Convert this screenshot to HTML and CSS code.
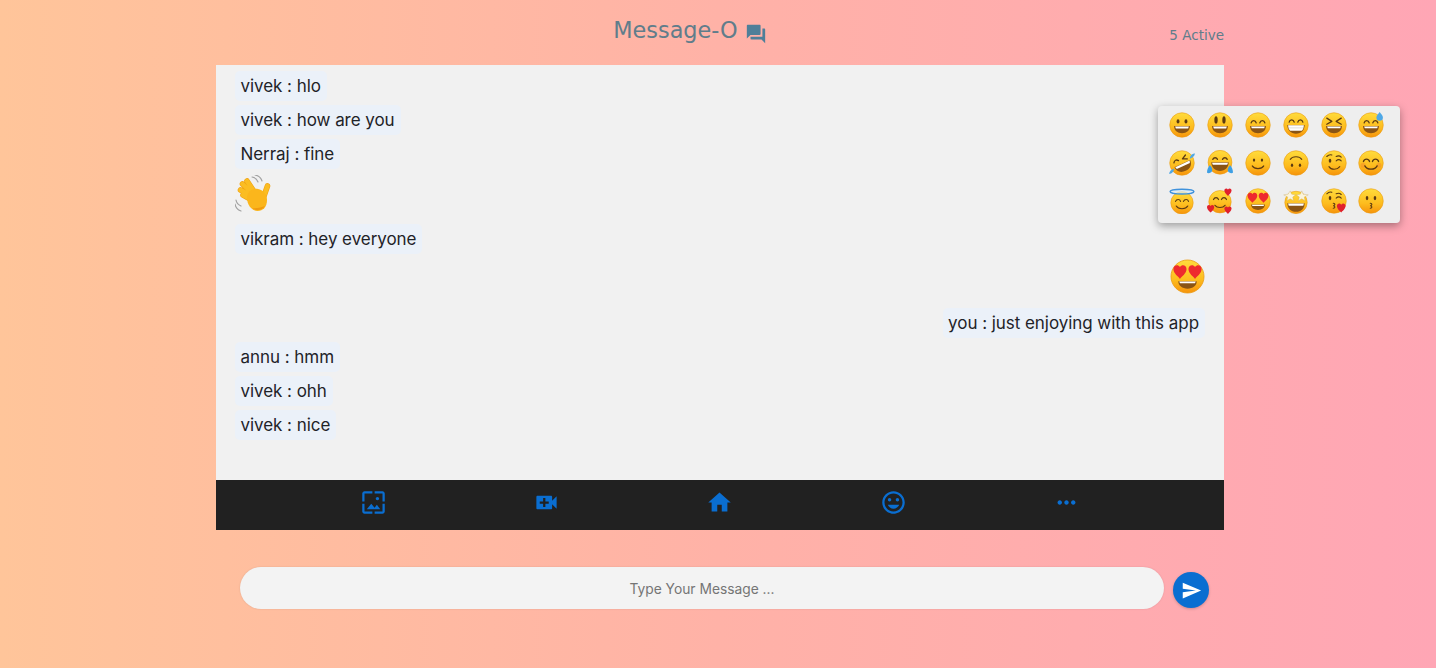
FILE: index.html
```html
<!DOCTYPE html>
<html lang="en">
<head>
<meta charset="utf-8">
<title>Message-O</title>
<link rel="stylesheet" href="styles.css">
</head>
<body>
<svg class="defs" width="0" height="0" aria-hidden="true">
  <defs>
    <linearGradient id="yf" x1="0" y1="0" x2="0" y2="1"><stop offset="0" stop-color="#ffdc3c"/><stop offset=".6" stop-color="#fdbc1e"/><stop offset="1" stop-color="#f6930b"/></linearGradient>
    <symbol id="face" viewBox="0 0 36 36"><circle cx="18" cy="18" r="17" fill="url(#yf)" stroke="#ea9a12" stroke-width=".8"/></symbol>
    <symbol id="e1" viewBox="0 0 36 36"><use href="#face"/><ellipse cx="12.500" cy="13" rx="2" ry="2.800" fill="#5a3a12"/><ellipse cx="23.500" cy="13" rx="2" ry="2.800" fill="#5a3a12"/><path d="M7 19.500h22c0 6-4.500 10-11 10S7 25.500 7 19.500z" fill="#8a5414"/><path d="M8.500 20h19l-1 3h-17z" fill="#fff"/></symbol>
    <symbol id="e2" viewBox="0 0 36 36"><use href="#face"/><ellipse cx="12.500" cy="11" rx="2.300" ry="5" fill="#5a3a12"/><ellipse cx="23.500" cy="11" rx="2.300" ry="5" fill="#5a3a12"/><path d="M7 19.500h22c0 6-4.500 10-11 10S7 25.500 7 19.500z" fill="#8a5414"/><path d="M8.500 20h19l-1 3h-17z" fill="#fff"/></symbol>
    <symbol id="e3" viewBox="0 0 36 36"><use href="#face"/><path d="M8.500 15c1-4 6-4 7 0M20.500 15c1-4 6-4 7 0" fill="none" stroke="#5a3a12" stroke-width="1.800" stroke-linecap="round"/><path d="M7 19.500h22c0 6-4.500 10-11 10S7 25.500 7 19.500z" fill="#8a5414"/><path d="M8.500 20h19l-1 2.500h-17z" fill="#fff"/></symbol>
    <symbol id="e4" viewBox="0 0 36 36"><use href="#face"/><path d="M8.500 14c1-4 6-4 7 0M20.500 14c1-4 6-4 7 0" fill="none" stroke="#5a3a12" stroke-width="1.800" stroke-linecap="round"/><path d="M6 18h24c0 7-5 12-12 12S6 25 6 18z" fill="#8a5414"/><path d="M7 18.500h22c-.5 3.500-1 6-3 7.500H10c-2-1.500-2.500-4-3-7.500z" fill="#fff"/><path d="M7.500 22h21" stroke="#b9b4ac" stroke-width=".6"/></symbol>
    <symbol id="e5" viewBox="0 0 36 36"><use href="#face"/><path d="M8 8.500l7 4.500-7 4M28 8.500l-7 4.500 7 4" fill="none" stroke="#5a3a12" stroke-width="1.800" stroke-linecap="round" stroke-linejoin="round"/><path d="M7 19.500h22c0 6-4.500 10-11 10S7 25.500 7 19.500z" fill="#8a5414"/><path d="M8.500 20h19l-1 2.500h-17z" fill="#fff"/></symbol>
    <symbol id="e6" viewBox="0 0 36 36"><use href="#face"/><path d="M8.500 15c1-4 6-4 7 0M20.500 15c1-4 6-4 7 0" fill="none" stroke="#5a3a12" stroke-width="1.800" stroke-linecap="round"/><path d="M7 19.500h22c0 6-4.500 10-11 10S7 25.500 7 19.500z" fill="#8a5414"/><path d="M8.500 20h19l-1 2.500h-17z" fill="#fff"/><path d="M30 0c2 3 4.500 5 4.500 7.500a4.500 4.500 0 0 1-9 0C25.500 5 28 3 30 0z" fill="#4fa8e6"/></symbol>
    <symbol id="e7" viewBox="0 0 36 36"><use href="#face"/><g transform="rotate(-25 18 18)"><path d="M8 13c2-3 5-3 7 0M21 13l6-3M21 13l6 3" fill="none" stroke="#5a3a12" stroke-width="1.800" stroke-linecap="round"/><path d="M6 19h24c0 7-5 11-12 11S6 26 6 19z" fill="#8a5414"/><path d="M7 19.500h22l-1 3H8z" fill="#fff"/></g><path d="M0 33c1-4 3-6 7-7 0 4-3 7-7 7zM36 5c-1 4-3 6-7 7 0-4 3-7 7-7z" fill="#4fa8e6"/></symbol>
    <symbol id="e8" viewBox="0 0 36 36"><circle cx="18" cy="17" r="16.500" fill="url(#yf)" stroke="#ea9a12" stroke-width=".8"/><path d="M8 13c1.500-3 5-3 6.500 0M21.500 13c1.500-3 5-3 6.500 0" fill="none" stroke="#5a3a12" stroke-width="1.800" stroke-linecap="round"/><path d="M6 17h24c0 7-5 12-12 12S6 24 6 17z" fill="#8a5414"/><path d="M7 17.500h22l-1 3H8z" fill="#fff"/><path d="M0 31c0-4 2-8 4-10 3 3 4 6 3 8-1 3-6 4-7 2zM36 31c0-4-2-8-4-10-3 3-4 6-3 8 1 3 6 4 7 2z" fill="#3d9fe4"/></symbol>
    <symbol id="e9" viewBox="0 0 36 36"><use href="#face"/><ellipse cx="12.500" cy="14" rx="1.600" ry="2.400" fill="#5a3a12"/><ellipse cx="23.500" cy="14" rx="1.600" ry="2.400" fill="#5a3a12"/><path d="M10 22c3 5 13 5 16 0" fill="none" stroke="#5a3a12" stroke-width="1.500" stroke-linecap="round"/></symbol>
    <symbol id="e10" viewBox="0 0 36 36"><use href="#face"/><ellipse cx="12.500" cy="21" rx="1.600" ry="2.400" fill="#5a3a12"/><ellipse cx="23.500" cy="21" rx="1.600" ry="2.400" fill="#5a3a12"/><path d="M10 13c3-5 13-5 16 0" fill="none" stroke="#5a3a12" stroke-width="1.500" stroke-linecap="round"/></symbol>
    <symbol id="e11" viewBox="0 0 36 36"><use href="#face"/><ellipse cx="12.500" cy="15" rx="1.800" ry="2.800" fill="#5a3a12"/><path d="M8 9c2-2 5-3 7-2M21 15c2-2 5-2 7 0M21 9c2-1 5-1 7 1" fill="none" stroke="#5a3a12" stroke-width="1.500" stroke-linecap="round"/><path d="M11 23c3 5 11 5 15 0" fill="none" stroke="#5a3a12" stroke-width="1.500" stroke-linecap="round"/></symbol>
    <symbol id="e12" viewBox="0 0 36 36"><use href="#face"/><circle cx="7" cy="21" r="3.500" fill="#f58a2a" opacity=".5"/><circle cx="29" cy="21" r="3.500" fill="#f58a2a" opacity=".5"/><path d="M7.500 16c1.500-4.500 7-4.500 8.500 0M20 16c1.500-4.500 7-4.500 8.500 0M9.500 22c3 6 14 6 17 0" fill="none" stroke="#5a3a12" stroke-width="1.800" stroke-linecap="round"/></symbol>
    <symbol id="e13" viewBox="0 0 36 36"><circle cx="18" cy="20.500" r="15.500" fill="url(#yf)" stroke="#ea9a12" stroke-width=".8"/><path d="M9 18.500c1.500-3.500 6-3.500 7 0M20 18.500c1.500-3.500 6-3.500 7 0M10 25c3 5 13 5 16 0" fill="none" stroke="#5a3a12" stroke-width="1.600" stroke-linecap="round"/><ellipse cx="18" cy="5" rx="16.500" ry="3.400" fill="#d8edf8" fill-opacity=".7" stroke="#3f92dc" stroke-width="2"/></symbol>
    <g id="heart"><path d="M0 2.500C0-.5 3.500-1.500 5 1 6.500-1.500 10-.5 10 2.500 10 6 6 8.500 5 10 4 8.500 0 6 0 2.500z"/></g>
    <symbol id="e14" viewBox="0 0 36 36"><circle cx="18" cy="19" r="15.500" fill="url(#yf)" stroke="#ea9a12" stroke-width=".8"/><path d="M9 16c1.500-3.500 5.500-3.500 7 0M20 16c1.500-3.500 5.500-3.500 7 0M11 24c3 4 11 4 14 0" fill="none" stroke="#5a3a12" stroke-width="1.600" stroke-linecap="round"/><use href="#heart" fill="#e0202c" transform="translate(24 1)"/><use href="#heart" fill="#e0202c" transform="translate(0 24)"/><use href="#heart" fill="#e0202c" transform="translate(24 26)"/></symbol>
    <symbol id="e15" viewBox="0 0 36 36"><use href="#face"/><use href="#heart" fill="#ee2a2e" transform="translate(3.500 7) scale(1.350)"/><use href="#heart" fill="#ee2a2e" transform="translate(19 7) scale(1.350)"/><path d="M8.500 23h19c0 4.500-4 7.500-9.500 7.500S8.500 27.500 8.500 23z" fill="#8a5414"/><path d="M9.500 23.200h17l-.8 1.800H10.300z" fill="#fff"/></symbol>
    <symbol id="e16" viewBox="0 0 36 36"><circle cx="18" cy="20" r="15.500" fill="url(#yf)" stroke="#ea9a12" stroke-width=".8"/><path d="M10 4l2 4.500 5.500 1-4 3 1 5-4.500-2.500L5.500 17.500l1-5L1 9.500l6-1zM26 4l2 4.500 7 1-5.500 3 1 5-4.500-2.500-4.500 2.500 1-5-4-3 5.500-1z" fill="#fbf4dc" stroke="#c7a45a" stroke-width=".5"/><path d="M6 21h24c0 7-5 12-12 12S6 28 6 21z" fill="#8a5414"/><path d="M7 21.500h22l-1 3H8z" fill="#fff"/></symbol>
    <symbol id="e17" viewBox="0 0 36 36"><use href="#face"/><ellipse cx="12.500" cy="14" rx="1.800" ry="2.800" fill="#5a3a12"/><path d="M8 8c2-2 5-3 7-2M21 14c2-2 5-2 7 0M21 8c2-1 5-1 7 1M17 21c3 0 3 3 0 3.500 3 .5 3 3.500 0 3.500" fill="none" stroke="#5a3a12" stroke-width="1.500" stroke-linecap="round"/><use href="#heart" fill="#e0202c" transform="translate(22 22) scale(1.200)"/></symbol>
    <symbol id="e18" viewBox="0 0 36 36"><use href="#face"/><ellipse cx="12.500" cy="14" rx="1.800" ry="2.800" fill="#5a3a12"/><ellipse cx="23.500" cy="14" rx="1.800" ry="2.800" fill="#5a3a12"/><path d="M17 21c3 0 3 3 0 3.500 3 .5 3 3.500 0 3.500" fill="none" stroke="#5a3a12" stroke-width="1.500" stroke-linecap="round"/></symbol>
    <symbol id="wave" viewBox="0 0 38 38">
      <path d="M17 2c3 .5 5 2.500 6 5M20 0c3 .5 6 3 7 6M1 25c.5 3 2.500 5 5 6M0 29c.5 3 3 6 6 7" stroke="#a3a3a3" stroke-width="1.200" fill="none" stroke-linecap="round"/>
      <g stroke-linecap="round" fill="none" stroke="#f0a315" stroke-width="5.600">
        <path d="M20 18L12 6M18 19L7.500 9M16.500 21L5.500 15M17 25L8 20M29 21l3.500-10"/>
      </g>
      <g stroke-linecap="round" fill="none" stroke="#fbbd22" stroke-width="4.400">
        <path d="M20 18L12 6M18 19L7.500 9M16.500 21L5.500 15M17 25L8 20M29 21l3.500-10"/>
      </g>
      <path d="M12 23c0-6 5-10 11-9 5 1 9 5 9 11 0 7-4 11-9.500 11S12 30 12 23z" fill="#fbb61c"/>
      <path d="M17 33c4 3 10 3 13-2-3 1-9 3-13 2z" fill="#f19a10"/>
    </symbol>
  </defs>
</svg>

<div class="app">
  <header class="top">
    <h1 class="title">Message-O <svg class="forum" viewBox="0 0 24 24"><path d="M21 6h-2v9H6v2c0 .55.45 1 1 1h11l4 4V7c0-.55-.45-1-1-1zm-4 6V3c0-.55-.45-1-1-1H3c-.55 0-1 .45-1 1v14l4-4h10c.55 0 1-.45 1-1z"/></svg></h1>
    <span class="active">5 Active</span>
  </header>

  <section class="chat">
    <div class="messages">
      <p class="msg"><span class="bubble">vivek : hlo</span></p>
      <p class="msg"><span class="bubble">vivek : how are you</span></p>
      <p class="msg"><span class="bubble">Nerraj : fine</span></p>
      <svg class="wave-emoji"><use href="#wave"/></svg>
      <p class="msg"><span class="bubble">vikram : hey everyone</span></p>
      <div class="msg mine emoji-row"><svg class="big-emoji"><use href="#e15"/></svg></div>
      <p class="msg mine"><span class="bubble">you : just enjoying with this app</span></p>
      <p class="msg"><span class="bubble">annu : hmm</span></p>
      <p class="msg"><span class="bubble">vivek : ohh</span></p>
      <p class="msg"><span class="bubble">vivek : nice</span></p>
    </div>
    <nav class="toolbar">
      <span class="tool"><svg viewBox="0 0 24 24"><path d="M4 4h7V2H4c-1.100 0-2 .9-2 2v7h2V4zm6 9l-4 5h12l-3-4-2.030 2.710L10 13zm7-4.500c0-.83-.67-1.500-1.500-1.500S14 7.670 14 8.500s.67 1.500 1.500 1.500S17 9.330 17 8.500zM20 2h-7v2h7v7h2V4c0-1.100-.9-2-2-2zm0 18h-7v2h7c1.100 0 2-.9 2-2v-7h-2v7zM4 13H2v7c0 1.100.9 2 2 2h7v-2H4v-7z"/></svg></span>
      <span class="tool"><svg viewBox="0 0 24 24"><path d="M17 10.500V7c0-.55-.45-1-1-1H4c-.55 0-1 .45-1 1v10c0 .55.45 1 1 1h12c.55 0 1-.45 1-1v-3.500l4 4v-11l-4 4zM14 13h-3v3H9v-3H6v-2h3V8h2v3h3v2z"/></svg></span>
      <span class="tool"><svg viewBox="0 0 24 24"><path d="M10 20v-6h4v6h5v-8h3L12 3 2 12h3v8z"/></svg></span>
      <span class="tool"><svg viewBox="0 0 24 24"><path d="M12 2C6.470 2 2 6.470 2 12s4.470 10 10 10 10-4.480 10-10S17.520 2 12 2zm0 18c-4.420 0-8-3.580-8-8s3.580-8 8-8 8 3.580 8 8-3.580 8-8 8zm3.500-9c.83 0 1.500-.67 1.500-1.500S16.330 8 15.500 8 14 8.670 14 9.500s.67 1.500 1.500 1.500zm-7 0c.83 0 1.500-.67 1.500-1.500S9.330 8 8.500 8 7 8.670 7 9.500 7.670 11 8.500 11zm3.500 6.500c2.330 0 4.310-1.460 5.110-3.500H6.890c.8 2.040 2.780 3.500 5.110 3.500z"/></svg></span>
      <span class="tool"><svg viewBox="0 0 24 24"><path d="M6 10c-1.100 0-2 .9-2 2s.9 2 2 2 2-.9 2-2-.9-2-2-2zm12 0c-1.100 0-2 .9-2 2s.9 2 2 2 2-.9 2-2-.9-2-2-2zm-6 0c-1.100 0-2 .9-2 2s.9 2 2 2 2-.9 2-2-.9-2-2-2z"/></svg></span>
    </nav>
  </section>

  <form class="composer">
    <input class="field" type="text" placeholder="Type Your Message ...">
    <button class="send" type="button"><svg viewBox="0 0 24 24"><path d="M2.010 21L23 12 2.010 3 2 10l15 2-15 2z"/></svg></button>
  </form>
</div>

<aside class="picker">
  <svg class="emoji"><use href="#e1"/></svg><svg class="emoji"><use href="#e2"/></svg><svg class="emoji"><use href="#e3"/></svg><svg class="emoji"><use href="#e4"/></svg><svg class="emoji"><use href="#e5"/></svg><svg class="emoji"><use href="#e6"/></svg>
  <svg class="emoji"><use href="#e7"/></svg><svg class="emoji"><use href="#e8"/></svg><svg class="emoji"><use href="#e9"/></svg><svg class="emoji"><use href="#e10"/></svg><svg class="emoji"><use href="#e11"/></svg><svg class="emoji"><use href="#e12"/></svg>
  <svg class="emoji"><use href="#e13"/></svg><svg class="emoji"><use href="#e14"/></svg><svg class="emoji"><use href="#e15"/></svg><svg class="emoji"><use href="#e16"/></svg><svg class="emoji"><use href="#e17"/></svg><svg class="emoji"><use href="#e18"/></svg>
</aside>
</body>
</html>
```

FILE: styles.css
```css
* { box-sizing: border-box; }
html, body { height: 100%; }
body {
  margin: 0;
  overflow: hidden;
  background: linear-gradient(to right, #ffc59a 0%, #ffb2a7 50%, #ffa6b5 100%);
  font-family: Inter, "Liberation Sans", sans-serif;
}
.defs { position: absolute; }
.app { width: 1008px; margin-left: 216px; }
.top { position: relative; height: 65px; display: flex; justify-content: center; padding-top: 15px; color: #607d8b; }
.title { margin: 0 0 0 -60px; font: 400 22.4px/30px "DejaVu Sans", sans-serif; display: flex; align-items: flex-start; white-space: pre; }
.forum { width: 22px; height: 22px; fill: #4f7f99; margin: 8px 0 0 0; }
.active { position: absolute; right: 0; top: 27px; font: 400 13.5px/16px "DejaVu Sans", sans-serif; }
.chat { background: #f1f1f1; }
.messages { height: 415px; padding: 6px 19px 0; display: flex; flex-direction: column; }
.msg { margin: 0 0 4px; height: 30px; display: flex; justify-content: flex-start; }
.mine { justify-content: flex-end; }
.bubble { padding: 0 6px 0 5.5px; height: 30px; border-radius: 5px; background: #ebf1f9; color: #1f2328; font-size: 17px; letter-spacing: -.05px; line-height: 30px; }
.big-emoji { width: 35px; height: 35px; flex: none; }
.wave-emoji { width: 38px; height: 38px; margin: 2px 0 11px; display: block; flex: none; }
.emoji-row { height: 36px; margin: 1px 0 13px; }
.toolbar { height: 50px; padding: 9px 7% 0; background: #212121; display: flex; }
.tool { flex: 1; display: flex; justify-content: center; }
.tool svg { width: 27px; height: 27px; fill: #0a6ed1; }
.composer { margin: 37px 0 0 24px; display: flex; align-items: center; gap: 9px; }
.field { width: 924px; height: 42px; padding: 2px 0 0; border: 0; border-radius: 21px; background: #f3f3f3; box-shadow: 0 0 2px rgba(0,0,0,.12); text-align: center; font: 400 13.8px Inter, sans-serif; outline: 0; }
.field::placeholder { color: #757575; }
.send { width: 36px; height: 36px; margin-top: 4px; padding: 0; border: 0; border-radius: 50%; background: #0a6ed1; display: flex; align-items: center; justify-content: center; box-shadow: 0 1px 3px rgba(0,0,0,.2); }
.send svg { width: 21px; height: 21px; fill: #fff; }
.picker {
  position: absolute; left: 1158px; top: 106px; width: 242px; height: 117px;
  padding: 0 0 4px 5.5px; border-radius: 4px; background: #eeeeee;
  box-shadow: 0 3px 8px rgba(0,0,0,.35);
  display: grid; grid-template-columns: repeat(6, 37.8px); grid-auto-rows: 38px; align-items: center; justify-items: center; align-content: center;
}
.emoji { width: 26px; height: 26px; }
```
